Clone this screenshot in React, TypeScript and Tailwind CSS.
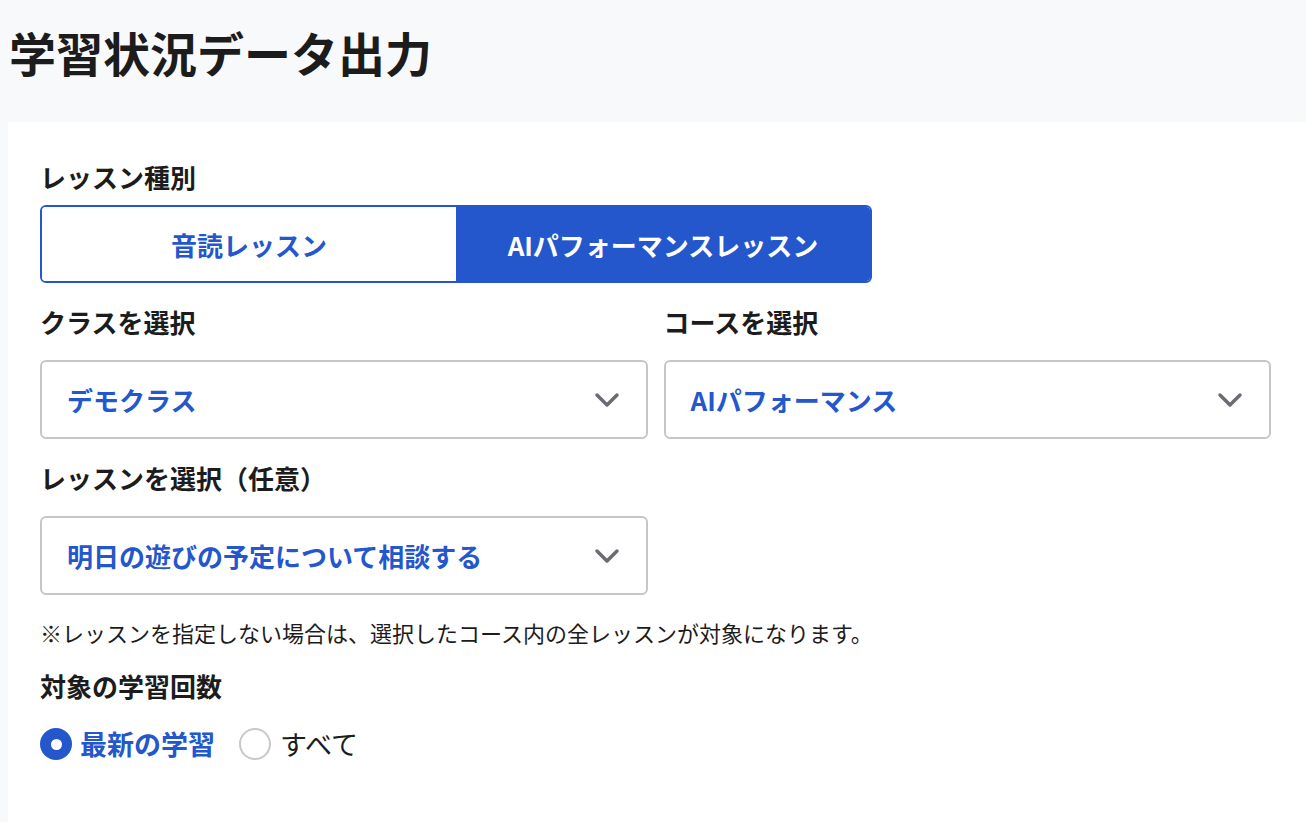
import React, { useState } from 'react'

const font = { fontFamily: '"Noto Sans CJK JP", "Noto Sans", sans-serif' }

function Chevron() {
    return (
        <svg width="26" height="16" viewBox="0 0 26 16" fill="none">
            <path d="M3 3l10 10L23 3" stroke="#6b6b73" strokeWidth="3.5" strokeLinecap="round" strokeLinejoin="round" />
        </svg>
    )
}

function SelectBox({ value }: { value: string }) {
    return (
        <div className="flex h-[79px] items-center justify-between rounded-[6px] border-2 border-[#c6c6c6] bg-white pl-[25px] pr-[26px]">
            <span className="text-[26px] font-bold text-[#2557cc]">{value}</span>
            <Chevron />
        </div>
    )
}

function Radio({ on }: { on: boolean }) {
    return on ? (
        <span className="flex h-[32px] w-[32px] items-center justify-center rounded-full bg-[#2557cc]">
            <span className="h-[11px] w-[11px] rounded-full bg-white" />
        </span>
    ) : (
        <span className="h-[32px] w-[32px] rounded-full border-2 border-[#c8c8c8] bg-white" />
    )
}

export default function App() {
    const [kind, setKind] = useState('ai')
    const [scope, setScope] = useState('latest')

    return (
        <div style={font} className="min-h-[822px] w-full bg-[#f8f9fa] text-[#1c1c1c]">
            <h1 className="flex h-[122px] items-start pl-[9px] pt-[20px] text-[47px] font-bold leading-[64px]">
                学習状況データ出力
            </h1>

            <div className="ml-2 min-h-[700px] bg-white pl-8 pr-[35px] pt-[36px]">
                <p className="text-[26px] font-bold leading-[38px]">レッスン種別</p>

                <div className="mt-[9px] flex h-[78px] w-[832px] overflow-hidden rounded-[6px] border-2 border-[#2557cc]">
                    <button
                        className={`flex-1 text-[26px] font-bold ${kind === 'read' ? 'bg-[#2557cc] text-white' : 'bg-white text-[#2557cc]'}`}
                        onClick={() => setKind('read')}
                    >
                        音読レッスン
                    </button>
                    <button
                        className={`flex-1 text-[26px] font-bold ${kind === 'ai' ? 'bg-[#2557cc] text-white' : 'bg-white text-[#2557cc]'}`}
                        onClick={() => setKind('ai')}
                    >
                        AIパフォーマンスレッスン
                    </button>
                </div>

                <div className="mt-[20px] grid grid-cols-2 gap-4">
                    <div>
                        <p className="text-[26px] font-bold leading-[38px]">クラスを選択</p>
                        <div className="mt-[19px]">
                            <SelectBox value="デモクラス" />
                        </div>
                    </div>
                    <div>
                        <p className="text-[26px] font-bold leading-[38px]">コースを選択</p>
                        <div className="mt-[19px]">
                            <SelectBox value="AIパフォーマンス" />
                        </div>
                    </div>
                </div>

                <p className="mt-[20px] text-[26px] font-bold leading-[38px]">レッスンを選択（任意）</p>
                <div className="mt-[19px] w-[608px]">
                    <SelectBox value="明日の遊びの予定について相談する" />
                </div>

                <p className="mt-[21px] text-[22px] leading-[32px]">
                    ※レッスンを指定しない場合は、選択したコース内の全レッスンが対象になります。
                </p>

                <p className="mt-[19px] text-[26px] font-bold leading-[38px]">対象の学習回数</p>

                <div className="mt-[20px] flex items-center text-[27px] leading-[38px]">
                    <label className="flex cursor-pointer items-center gap-[8px]" onClick={() => setScope('latest')}>
                        <Radio on={scope === 'latest'} />
                        <span className={scope === 'latest' ? 'font-bold text-[#2557cc]' : ''}>最新の学習</span>
                    </label>
                    <label className="ml-[24px] flex cursor-pointer items-center gap-[9px]" onClick={() => setScope('all')}>
                        <Radio on={scope === 'all'} />
                        <span className={scope === 'all' ? 'font-bold text-[#2557cc]' : ''}>すべて</span>
                    </label>
                </div>
            </div>
        </div>
    )
}
